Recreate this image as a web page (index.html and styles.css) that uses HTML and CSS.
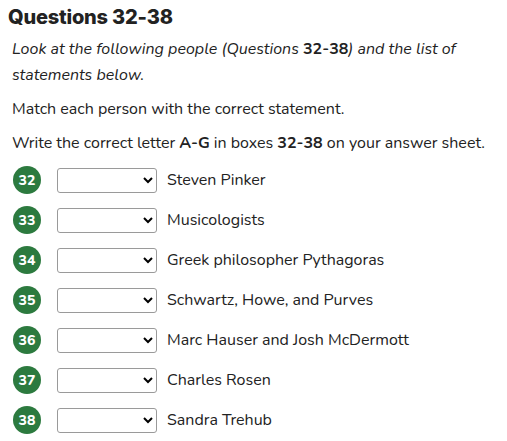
FILE: index.html
```html
<!DOCTYPE html>
<html>
<head>
<meta charset="utf-8">
<link rel="stylesheet" href="styles.css">
</head>
<body>
<div class="wrap">
  <h2 class="title">Questions 32-38</h2>
  <div class="content">
    <p class="intro"><em>Look at the following people (Questions </em><b>32-38</b><em>) and the list of statements below.</em></p>
    <p>Match each person with the correct statement.</p>
    <p>Write the correct letter <b>A-G</b> in boxes <b>32-38</b> on your answer sheet.</p>
    <ul class="qs">
      <li class="q"><span class="num">32</span><select class="sel"><option></option></select><span class="label">Steven Pinker</span></li>
      <li class="q"><span class="num">33</span><select class="sel"><option></option></select><span class="label">Musicologists</span></li>
      <li class="q"><span class="num">34</span><select class="sel"><option></option></select><span class="label">Greek philosopher Pythagoras</span></li>
      <li class="q"><span class="num">35</span><select class="sel"><option></option></select><span class="label">Schwartz, Howe, and Purves</span></li>
      <li class="q"><span class="num">36</span><select class="sel"><option></option></select><span class="label">Marc Hauser and Josh McDermott</span></li>
      <li class="q"><span class="num">37</span><select class="sel"><option></option></select><span class="label">Charles Rosen</span></li>
      <li class="q"><span class="num">38</span><select class="sel"><option></option></select><span class="label">Sandra Trehub</span></li>
    </ul>
  </div>
</div>
</body>
</html>
```
FILE: styles.css
```css
body {
  margin: 0;
  background: #fff;
  color: #222;
  font-family: "Nunito", "Lato", "Open Sans", sans-serif;
}
.wrap {
  padding: 4px 8px 0 8px;
}
.title {
  margin: 0;
  font-family: "Inter", "Open Sans", sans-serif;
  font-weight: 800;
  font-size: 20px;
  line-height: 26px;
  color: #222;
  letter-spacing: -0.2px;
}
.content {
  padding: 0 4px;
}
.content p {
  margin: 8px 0 0 0;
  font-size: 16px;
  line-height: 26px;
}
.content p.intro {
  margin-top: 6px;
}
.content b {
  font-weight: 700;
  font-style: normal;
}
.qs {
  list-style: none;
  margin: 10px 0 0 0;
  padding: 0;
  display: flex;
  flex-direction: column;
  gap: 12px;
}
.q {
  display: flex;
  align-items: center;
  height: 28px;
}
.num {
  width: 28px;
  height: 28px;
  border-radius: 50%;
  background: #2c7a3f;
  color: #fff;
  font-weight: 800;
  font-size: 14px;
  display: flex;
  align-items: center;
  justify-content: center;
  margin-left: 1px;
}
.sel {
  margin-left: 16px;
  width: 100px;
  height: 25px;
  border: 1px solid #9a9a9a;
  border-radius: 3px;
  background: #fff;
  font-size: 14px;
}
.label {
  margin-left: 10px;
  font-size: 16px;
}
```
